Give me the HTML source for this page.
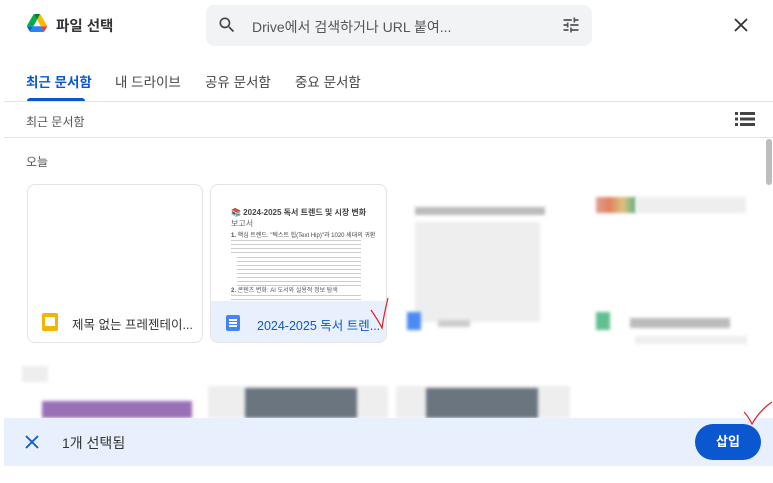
<!DOCTYPE html>
<html><head><meta charset="utf-8"><style>
*{margin:0;padding:0;box-sizing:border-box}
body{width:773px;height:483px;overflow:hidden;background:#fff;font-family:"Liberation Sans","Noto Sans CJK KR",sans-serif;position:relative;color:#1f1f1f}
.a{position:absolute}
.t{white-space:nowrap}
.b{filter:blur(1.5px)}
</style></head><body>
<svg class="a" style="left:27px;top:14px" width="20" height="18" viewBox="0 0 87 78"><path d="M6.6 66.85l3.850 6.65c.8 1.4 1.95 2.5 3.3 3.3L27.5 53H0c0 1.55.4 3.1 1.2 4.5z" fill="#0066da"/><path d="M43.65 25L29.9 1.2c-1.35.8-2.5 1.9-3.3 3.3l-25.4 44A9.06 9.06 0 000 53h27.5z" fill="#00ac47"/><path d="M73.55 76.8c1.35-.8 2.5-1.9 3.3-3.3l1.6-2.75 7.65-13.25c.8-1.4 1.2-2.95 1.2-4.5H59.8l5.850 11.5z" fill="#ea4335"/><path d="M43.65 25L57.4 1.2C56.05.4 54.5 0 52.9 0H34.4c-1.6 0-3.15.45-4.5 1.2z" fill="#00832d"/><path d="M59.8 53H27.5L13.75 76.8c1.35.8 2.9 1.2 4.5 1.2h50.8c1.6 0 3.15-.45 4.5-1.2z" fill="#2684fc"/><path d="M73.4 26.5l-12.7-22c-.8-1.4-1.95-2.5-3.3-3.3L43.65 25 59.8 53h27.45c0-1.55-.4-3.1-1.2-4.5z" fill="#ffba00"/></svg>
<div class="a t" style="left:56px;top:15px;font-size:14.5px;font-weight:bold;color:#333">파일 선택</div>
<div class="a" style="left:206px;top:5px;width:386px;height:41px;background:#f1f3f4;border-radius:8px"></div>
<svg class="a" style="left:217px;top:15px" width="20" height="20" viewBox="0 0 24 24"><path d="M15.5 14h-.79l-.28-.27A6.47 6.47 0 0016 9.5 6.5 6.5 0 109.5 16c1.610 0 3.090-.59 4.230-1.57l.27.28v.79l5 4.99L20.49 19zm-6 0C7.01 14 5 11.99 5 9.5S7.01 5 9.5 5 14 7.01 14 9.5 11.99 14 9.5 14z" fill="#444"/></svg>
<div class="a t" style="left:252px;top:17px;font-size:14px;color:#555">Drive에서 검색하거나 URL 붙여...</div>
<svg class="a" style="left:561px;top:15px" width="20" height="20" viewBox="0 0 24 24"><path d="M3 17v2h6v-2H3zM3 5v2h10V5H3zm10 16v-2h8v-2h-8v-2h-2v6h2zM7 9v2H3v2h4v2h2V9H7zm14 4v-2H11v2h10zm-6-4h2V7h4V5h-4V3h-2v6z" fill="#555"/></svg>
<svg class="a" style="left:733px;top:17px" width="16" height="16" viewBox="0 0 16 16"><path d="M2 2L14 14M14 2L2 14" stroke="#333" stroke-width="1.8"/></svg>
<div class="a t" style="left:26px;top:71px;font-size:13.5px;color:#0b57d0;font-weight:bold">최근 문서함</div>
<div class="a t" style="left:115px;top:71px;font-size:13.5px;color:#444">내 드라이브</div>
<div class="a t" style="left:205px;top:71px;font-size:13.5px;color:#444">공유 문서함</div>
<div class="a t" style="left:295px;top:71px;font-size:13.5px;color:#444">중요 문서함</div>
<div class="a" style="left:27px;top:98px;width:58px;height:3px;background:#0b57d0;border-radius:3px 3px 0 0"></div>
<div class="a" style="left:4px;top:101px;width:769px;height:1px;background:#e3e3e3"></div>
<div class="a t" style="left:26px;top:113px;font-size:12px;color:#555">최근 문서함</div>
<svg class="a" style="left:735px;top:111px" width="20" height="16" viewBox="0 0 20 16"><g fill="#444"><rect x="0" y="1" width="3" height="3"/><rect x="5" y="1" width="15" height="3"/><rect x="0" y="6.5" width="3" height="3"/><rect x="5" y="6.5" width="15" height="3"/><rect x="0" y="12" width="3" height="3"/><rect x="5" y="12" width="15" height="3"/></g></svg>
<div class="a" style="left:4px;top:137px;width:769px;height:1px;background:#e3e3e3"></div>
<div class="a" style="left:766px;top:139px;width:6px;height:46px;background:#bdbdbd;border-radius:3px"></div>
<div class="a t" style="left:26px;top:153px;font-size:12px;color:#555">오늘</div>
<!-- card1 -->
<div class="a" style="left:27px;top:184px;width:176px;height:159px;border:1px solid #e3e3e3;border-radius:8px"></div>
<div class="a" style="left:42px;top:313px;width:16px;height:18px;background:#f4b400;border-radius:2px"></div>
<div class="a" style="left:45px;top:317px;width:10px;height:9px;background:#fff"></div>
<div class="a t" style="left:72px;top:314px;font-size:12.5px;color:#333">제목 없는 프레젠테이...</div>
<!-- card2 -->
<div class="a" style="left:210px;top:184px;width:177px;height:159px;border:1px solid #e3e3e3;border-radius:8px;overflow:hidden">
<div class="a" style="left:0;top:116px;width:177px;height:43px;background:#e8f0fe"></div>
<div class="a t" style="left:20px;top:22px;font-size:8px;font-weight:bold;color:#444">📚 2024-2025 독서 트렌드 및 시장 변화</div>
<div class="a t" style="left:20px;top:33px;font-size:8px;color:#666">보고서</div>
<div class="a t" style="left:20px;top:45px;font-size:6px;color:#444"><b>1.</b> 핵심 트렌드: "텍스트 힙(Text Hip)"과 1020 세대의 귀환</div>
<div class="a" style="left:20px;top:55px;width:130px;height:14px;background:repeating-linear-gradient(#ccc 0 1px,#fff 1px 4px)"></div>
<div class="a" style="left:26px;top:72px;width:124px;height:30px;background:repeating-linear-gradient(#ccc 0 1px,#fff 1px 4px)"></div>
<div class="a t" style="left:20px;top:100px;font-size:6px;color:#555"><b>2.</b> 콘텐츠 변화: AI 도서와 실용적 정보 탐색</div>
<div class="a" style="left:20px;top:110px;width:130px;height:6px;background:repeating-linear-gradient(#ccc 0 1px,#fff 1px 4px)"></div>
<div class="a" style="left:15px;top:130px;width:14px;height:16px;background:#4285f4;border-radius:2px"></div>
<div class="a" style="left:18px;top:134px;width:8px;height:1.5px;background:#fff;box-shadow:0 3px #fff,0 6px #fff"></div>
<div class="a t" style="left:46px;top:130px;font-size:12.5px;color:#0b57d0">2024-2025 독서 트렌...</div>
</div>
<svg class="a" style="left:368px;top:296px" width="24" height="36"><path d="M3 14 Q10 24 14 32 Q16 18 20 2" stroke="#e02020" stroke-width="1.2" fill="none"/></svg>
<!-- blurry cards -->
<div class="a b" style="left:415px;top:207px;width:130px;height:8px;background:#bbb"></div>
<div class="a b" style="left:415px;top:222px;width:125px;height:100px;background:#eee"></div>
<div class="a b" style="left:407px;top:312px;width:14px;height:18px;background:#4a8af4"></div>
<div class="a b" style="left:438px;top:320px;width:32px;height:7px;background:#ccc"></div>
<div class="a b" style="left:596px;top:197px;width:40px;height:16px;background:linear-gradient(90deg,#e0a090,#e08060,#e0c080,#60b080)"></div>
<div class="a b" style="left:636px;top:197px;width:110px;height:16px;background:#eee"></div>
<div class="a b" style="left:596px;top:312px;width:14px;height:18px;background:#60c090"></div>
<div class="a b" style="left:630px;top:318px;width:100px;height:10px;background:#bbb"></div>
<div class="a b" style="left:635px;top:336px;width:112px;height:8px;background:#eee"></div>
<div class="a b" style="left:22px;top:366px;width:26px;height:16px;background:#eee"></div>
<div class="a b" style="left:42px;top:401px;width:150px;height:17px;background:#9a70b8"></div>
<div class="a b" style="left:208px;top:386px;width:180px;height:32px;background:#eee"></div>
<div class="a b" style="left:245px;top:388px;width:112px;height:30px;background:#6a7580"></div>
<div class="a b" style="left:396px;top:386px;width:174px;height:32px;background:#eee"></div>
<div class="a b" style="left:426px;top:388px;width:112px;height:30px;background:#6a7580"></div>
<!-- bottom bar -->
<div class="a" style="left:4px;top:418px;width:769px;height:48px;background:#e8f0fe"></div>
<svg class="a" style="left:25px;top:435px" width="14" height="14" viewBox="0 0 14 14"><path d="M1 1L13 13M13 1L1 13" stroke="#0b57d0" stroke-width="1.8"/></svg>
<div class="a t" style="left:62px;top:433px;font-size:14px;color:#333">1개 선택됨</div>
<div class="a" style="left:695px;top:424px;width:66px;height:36px;background:#0b57d0;border-radius:18px;color:#fff;font-size:13px;font-weight:bold;text-align:center;line-height:36px">삽입</div>
<svg class="a" style="left:742px;top:400px" width="31" height="26"><path d="M2 12 Q6 16 10 24 Q18 10 30 2" stroke="#e02020" stroke-width="1.2" fill="none"/></svg>
</body></html>
